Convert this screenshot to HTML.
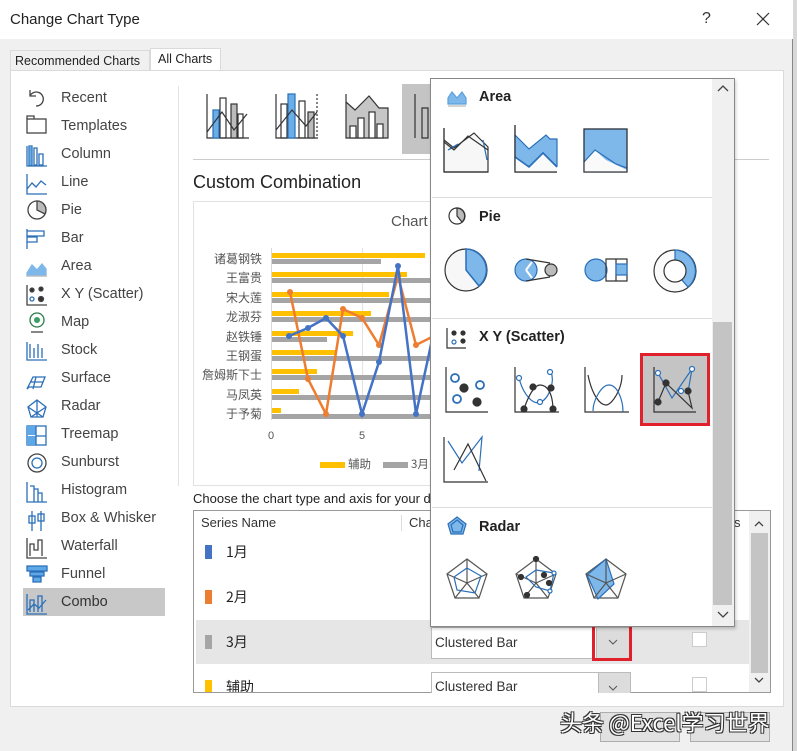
<!DOCTYPE html>
<html><head><meta charset="utf-8"><style>
*{margin:0;padding:0;box-sizing:border-box}
body{width:797px;height:751px;overflow:hidden;background:#d8d8d8;font-family:"Liberation Sans","Noto Sans CJK SC",sans-serif;position:relative;color:#222}
.a{position:absolute}
.t{position:absolute;white-space:nowrap}
.li{position:absolute;left:61px;font-size:14.5px;color:#444}
.ic{position:absolute;left:27px}
.hd{position:absolute;font-weight:bold;font-size:14.5px;color:#222}
.sep{position:absolute;left:432px;width:280px;height:1px;background:#dcdcdc}
.cl{font-size:13.5px;color:#333}
</style></head><body>
<!-- dialog -->
<div class="a" style="left:0;top:0;width:793px;height:751px;background:#f0f0f0;border-right:1px solid #888"></div>
<div class="a" style="left:0;top:0;width:793px;height:39px;background:#fff"></div>
<div class="t" style="left:10px;top:11px;font-size:15px;color:#222">Change Chart Type</div>
<div class="t" style="left:702px;top:10px;font-size:16px;color:#333">?</div>
<svg class="a" style="left:756px;top:12px" width="14" height="14"><path d="M1 1L13 13M13 1L1 13" stroke="#333" stroke-width="1.2"/></svg>
<!-- tabs -->
<div class="a" style="left:10px;top:50px;width:140px;height:21px;border:1px solid #dadada;border-bottom:none;background:#f0f0f0"></div>
<div class="t" style="left:15px;top:54px;font-size:12.5px;color:#222">Recommended Charts</div>
<div class="a" style="left:150px;top:48px;width:71px;height:24px;background:#fff;border:1px solid #dadada;border-bottom:none"></div>
<div class="t" style="left:158px;top:52px;font-size:12.5px;color:#222">All Charts</div>
<div class="a" style="left:10px;top:70px;width:774px;height:637px;background:#fff;border:1px solid #dadada"></div>
<div class="a" style="left:178px;top:86px;width:1px;height:400px;background:#e3e3e3"></div>

<!-- left list -->
<div class="a" style="left:23px;top:588px;width:142px;height:28px;background:#c8c8c8"></div>
<div class="li" style="top:90px">Recent</div>
<div class="li" style="top:118px">Templates</div>
<div class="li" style="top:146px">Column</div>
<div class="li" style="top:174px">Line</div>
<div class="li" style="top:202px">Pie</div>
<div class="li" style="top:230px">Bar</div>
<div class="li" style="top:258px">Area</div>
<div class="li" style="top:286px">X Y (Scatter)</div>
<div class="li" style="top:314px">Map</div>
<div class="li" style="top:342px">Stock</div>
<div class="li" style="top:370px">Surface</div>
<div class="li" style="top:398px">Radar</div>
<div class="li" style="top:426px">Treemap</div>
<div class="li" style="top:454px">Sunburst</div>
<div class="li" style="top:482px">Histogram</div>
<div class="li" style="top:510px">Box &amp; Whisker</div>
<div class="li" style="top:538px">Waterfall</div>
<div class="li" style="top:566px">Funnel</div>
<div class="li" style="top:594px;color:#333">Combo</div>
<svg class="a" style="left:26px;top:86px" width="22" height="530" fill="none" stroke="#444" stroke-width="1.3">
 <path d="M4 4v6h6M4 10A7 7 0 1 1 10 20"/>
 <rect x="1" y="33" width="19" height="14"/><path d="M1 33v-3h7v3"/>
 <path d="M1 60v20h20M3 60h3v19h-3zM8 62h3v17h-3zM13 68h4v11h-4z" stroke="#2a6fb8"/><rect x="3.5" y="61" width="2" height="18" fill="#6aaee8" stroke="none"/>
 <path d="M1 88v20h20M1 103l5-6 4 4 5-6 5 4" stroke="#2a6fb8"/>
 <circle cx="11" cy="124" r="9"/><path d="M11 124V115A9 9 0 0 1 19 128z" fill="#bbb"/>
 <path d="M1 143v20M1 145h17v5H1M1 151h10v5H1" stroke="#2a6fb8"/>
 <path d="M1 187l5-8 5 5 5-6 4 5v7H1z" fill="#7eb8ea" stroke="#7eb8ea"/><path d="M1 190h20" stroke="#bbb"/>
 <path d="M1 199v20h20"/><circle cx="6" cy="204" r="2" fill="#333"/><circle cx="15" cy="203" r="2" fill="#333"/><circle cx="6" cy="213" r="2" stroke="#2a6fb8"/><circle cx="15" cy="213" r="2.5" fill="#333"/>
 <circle cx="11" cy="234" r="7" stroke="#2a7a4a"/><circle cx="11" cy="234" r="3" fill="#3aa060" stroke="none"/><path d="M5 246h12"/>
 <path d="M1 256v18h20M4 258v14M8 262v10M12 258v14M16 262v10" stroke="#2a6fb8"/>
 <path d="M1 303l6-12h12l-4 10H3zM5 296h12M10 291l-3 12" stroke="#2a6fb8"/>
 <path d="M11 314l9 7-3 10H5l-3-10z M11 314v17M2 321l15 10M20 321L5 331" stroke="#2a6fb8"/>
 <rect x="1" y="340" width="19" height="19" stroke="#2a6fb8"/><rect x="1" y="340" width="9" height="9" fill="#5fa8e8" stroke="none"/><rect x="1" y="350" width="9" height="9" fill="#5fa8e8" stroke="none"/><path d="M10 340v19M10 350h10" stroke="#2a6fb8"/>
 <circle cx="11" cy="377" r="9"/><circle cx="11" cy="377" r="5" stroke="#2a6fb8"/>
 <path d="M1 396v20h20M4 400h4v16M8 403h4v13M12 407h4v9" stroke="#2a6fb8"/>
 <path d="M6 425v20M15 425v20" stroke="#2a6fb8"/><rect x="3" y="430" width="6" height="7" stroke="#2a6fb8"/><rect x="12" y="428" width="6" height="7" stroke="#2a6fb8"/>
 <path d="M1 452v20h20M4 470v-12h4v6h4v-10h4v16"/>
 <path d="M1 480h20v5H1zM4 486h14v4H4zM7 491h8v5H7z" fill="#5fa8e8" stroke="#2a6fb8"/>
 <path d="M1 508v20h20M4 526v-12h4v12M12 526v-16h4v16M2 524l6-6 5 4 7-8" stroke="#2a6fb8"/>
</svg>

<!-- top thumbnails -->
<svg class="a" style="left:200px;top:84px" width="240" height="72" fill="none" stroke="#333" stroke-width="1.2">
 <path d="M7 10v44h42"/><rect x="13" y="26" width="6" height="28" fill="#6aaee8" stroke="#2a6fb8"/><rect x="20" y="14" width="6" height="40"/><rect x="31" y="20" width="6" height="34" fill="#bbb"/><rect x="38" y="30" width="5" height="24"/><path d="M7 48l15-20 12 18 13-16"/>
 <path d="M76 10v44h42"/><rect x="81" y="20" width="6" height="34"/><rect x="88" y="10" width="7" height="44" fill="#6aaee8" stroke="#2a6fb8"/><rect x="99" y="17" width="6" height="37"/><rect x="108" y="28" width="6" height="26" fill="#bbb"/><path d="M117 10v44" stroke-dasharray="2 2"/><path d="M76 46l16-20 14 16 11-14"/>
 <path d="M146 10v44h42V24h-9l-10-12-14 14-9-8z" fill="#c6c6c6"/><rect x="150" y="42" width="6" height="12" fill="#fff"/><rect x="158" y="34" width="6" height="20" fill="#fff"/><rect x="169" y="28" width="6" height="26" fill="#fff"/><rect x="177" y="40" width="6" height="14" fill="#fff"/>
 <rect x="202" y="0" width="38" height="70" fill="#c4c4c4" stroke="none"/><path d="M215 10v44M222 24h6v30h-6z"/>
</svg>
<div class="a" style="left:193px;top:159px;width:576px;height:1px;background:#ccc"></div>
<div class="t" style="left:193px;top:172px;font-size:18px;color:#222">Custom Combination</div>

<!-- preview chart -->
<div class="a" style="left:193px;top:201px;width:250px;height:285px;border:1px solid #e2e2e2"></div>
<div class="t" style="left:391px;top:213px;font-size:15px;color:#555">Chart</div>
<div class="a" style="left:362px;top:248px;width:1px;height:172px;background:#e2e2e2"></div>
<div class="a" style="left:271px;top:248px;width:1px;height:172px;background:#d8d8d8"></div>
<div class="t" style="left:196px;top:249px;width:66px;text-align:right;font-size:12px;line-height:19.4px;color:#555;white-space:normal;font-family:'Noto Sans CJK SC',sans-serif">诸葛钢铁<br>王富贵<br>宋大莲<br>龙淑芬<br>赵铁锤<br>王钢蛋<br>詹姆斯下士<br>马凤英<br>于予菊</div>
<svg class="a" style="left:0;top:0" width="432" height="480">
 <g fill="#ffc000">
 <rect x="272" y="253" width="153" height="5"/><rect x="272" y="272" width="135" height="5"/><rect x="272" y="292" width="117" height="5"/><rect x="272" y="311" width="99" height="5"/><rect x="272" y="331" width="81" height="5"/><rect x="272" y="350" width="63" height="5"/><rect x="272" y="369" width="45" height="5"/><rect x="272" y="389" width="27" height="5"/><rect x="272" y="408" width="9" height="5"/>
 </g>
 <g fill="#a5a5a5">
 <rect x="272" y="259" width="109" height="5"/><rect x="272" y="278" width="160" height="5"/><rect x="272" y="298" width="160" height="5"/><rect x="272" y="317" width="160" height="5"/><rect x="272" y="337" width="55" height="5"/><rect x="272" y="356" width="160" height="5"/><rect x="272" y="375" width="160" height="5"/><rect x="272" y="395" width="160" height="5"/><rect x="272" y="414" width="160" height="5"/>
 </g>
 <polyline points="290,292 308,379 326,414 343,309 362,318 379,345 398,276 416,345 432,337" fill="none" stroke="#ed7d31" stroke-width="2.5"/>
 <g fill="#ed7d31"><circle cx="290" cy="292" r="3"/><circle cx="308" cy="379" r="3"/><circle cx="326" cy="414" r="3"/><circle cx="343" cy="309" r="3"/><circle cx="362" cy="318" r="3"/><circle cx="379" cy="345" r="3"/><circle cx="398" cy="276" r="3"/><circle cx="416" cy="345" r="3"/></g>
 <polyline points="289,336 308,328 326,318 343,336 362,414 379,362 398,266 416,414 432,340" fill="none" stroke="#4472c4" stroke-width="2.5"/>
 <g fill="#4472c4"><circle cx="289" cy="336" r="3"/><circle cx="308" cy="328" r="3"/><circle cx="326" cy="318" r="3"/><circle cx="343" cy="336" r="3"/><circle cx="362" cy="414" r="3"/><circle cx="379" cy="362" r="3"/><circle cx="398" cy="266" r="3"/><circle cx="416" cy="414" r="3"/></g>
 <rect x="320" y="462" width="25" height="6" fill="#ffc000"/><rect x="383" y="462" width="25" height="6" fill="#a5a5a5"/>
</svg>
<div class="t" style="left:268px;top:430px;font-size:11px;color:#555">0</div>
<div class="t" style="left:359px;top:430px;font-size:11px;color:#555">5</div>
<div class="t" style="left:348px;top:456px;font-size:11.5px;color:#555;font-family:'Noto Sans CJK SC',sans-serif">辅助</div>
<div class="t" style="left:411px;top:456px;font-size:11.5px;color:#555;font-family:'Noto Sans CJK SC',sans-serif">3月</div>

<div class="t" style="left:193px;top:491px;font-size:13px;color:#222">Choose the chart type and axis for your data series:</div>
<!-- series table -->
<div class="a" style="left:193px;top:510px;width:578px;height:183px;border:1px solid #999;background:#fff;overflow:hidden">
 <div class="t" style="left:7px;top:4px;font-size:13px;color:#333">Series Name</div>
 <div class="a" style="left:207px;top:4px;width:1px;height:16px;background:#ddd"></div>
 <div class="t" style="left:215px;top:4px;font-size:13px;color:#333">Chart Type</div>
 <div class="t" style="left:522px;top:4px;font-size:13px;color:#333">Axis</div>
 <div class="a" style="left:2px;top:109px;width:553px;height:44px;background:#e6e6e6"></div>
 <div class="a" style="left:11px;top:34px;width:7px;height:14px;background:#4472c4"></div>
 <div class="t" style="left:32px;top:31px;font-size:14px;font-family:'Noto Sans CJK SC',sans-serif">1月</div>
 <div class="a" style="left:11px;top:79px;width:7px;height:14px;background:#ed7d31"></div>
 <div class="t" style="left:32px;top:76px;font-size:14px;font-family:'Noto Sans CJK SC',sans-serif">2月</div>
 <div class="a" style="left:11px;top:124px;width:7px;height:14px;background:#a5a5a5"></div>
 <div class="t" style="left:32px;top:121px;font-size:14px;font-family:'Noto Sans CJK SC',sans-serif">3月</div>
 <div class="a" style="left:11px;top:169px;width:7px;height:14px;background:#ffc000"></div>
 <div class="t" style="left:32px;top:166px;font-size:14px;font-family:'Noto Sans CJK SC',sans-serif">辅助</div>
 <div class="a" style="left:498px;top:121px;width:15px;height:15px;background:#fff;border:1px solid #ccc"></div>
 <div class="a" style="left:498px;top:166px;width:15px;height:15px;background:#fff;border:1px solid #ccc"></div>
 <div class="a" style="left:555px;top:0;width:22px;height:183px;background:#f0f0f0"></div>
 <div class="a" style="left:557px;top:22px;width:17px;height:140px;background:#c4c4c4"></div>
 <svg class="a" style="left:559px;top:7px" width="12" height="170" fill="none" stroke="#444" stroke-width="1.3"><path d="M2 8l4-4 4 4M2 160l4 4 4-4"/></svg>
</div>
<!-- combos -->
<div class="a" style="left:431px;top:627px;width:200px;height:32px;background:#fff;border:1px solid #bbb"></div>
<div class="t cl" style="left:435px;top:635px">Clustered Bar</div>
<div class="a" style="left:596px;top:628px;width:34px;height:30px;background:#dcdcdc;border-left:1px solid #bbb"></div>
<div class="a" style="left:592px;top:624px;width:40px;height:37px;border:3px solid #e0202a"></div>
<svg class="a" style="left:607px;top:638px" width="12" height="8"><path d="M2 2l4 4 4-4" fill="none" stroke="#555"/></svg>
<div class="a" style="left:431px;top:672px;width:200px;height:21px;background:#fff;border:1px solid #bbb;border-bottom:none"></div>
<div class="t cl" style="left:435px;top:679px">Clustered Bar</div>
<div class="a" style="left:598px;top:673px;width:32px;height:20px;background:#dcdcdc;border-left:1px solid #bbb"></div>
<svg class="a" style="left:607px;top:684px" width="12" height="8"><path d="M2 2l4 4 4-4" fill="none" stroke="#555"/></svg>

<!-- dropdown panel -->
<div class="a" style="left:430px;top:78px;width:305px;height:549px;background:#fff;border:1px solid #888;box-shadow:1px 2px 3px rgba(0,0,0,.2)"></div>
<div class="a" style="left:712px;top:79px;width:22px;height:547px;background:#f0f0f0"></div>
<div class="a" style="left:713px;top:322px;width:19px;height:283px;background:#c4c4c4"></div>
<svg class="a" style="left:716px;top:82px" width="14" height="540" fill="none" stroke="#444" stroke-width="1.3"><path d="M2 9l5-5 5 5M2 530l5 5 5-5"/></svg>
<div class="sep" style="top:197px"></div><div class="sep" style="top:318px"></div><div class="sep" style="top:507px"></div>
<div class="hd" style="left:479px;top:89px">Area</div>
<div class="hd" style="left:479px;top:209px">Pie</div>
<div class="hd" style="left:479px;top:329px">X Y (Scatter)</div>
<div class="hd" style="left:479px;top:519px">Radar</div>
<div class="a" style="left:640px;top:353px;width:70px;height:73px;background:#c4c4c4;border:3px solid #e0202a"></div>
<svg class="a" style="left:430px;top:78px" width="282" height="540" fill="none" stroke="#333" stroke-width="1.2">
 <!-- area hdr -->
 <path d="M18 20l4-6 5 6 5-6 4 6v6H18z" fill="#7eb8ea" stroke="#5aa0dc"/><path d="M18 28h18" stroke="#bbb"/>
 <!-- area thumbs -->
 <path d="M14 50v44h44V69l-14-14-20 15-10-8" fill="#f7f7f7"/><path d="M14 94V50M14 94h44" /><path d="M18 72l10-6-6 4zM53 62l4 20" fill="#7eb8ea" stroke="#2a6fb8"/><path d="M14 64l10 8 14-14 20 14"/>
 <path d="M85 47v47h42" /><path d="M85 57l14 14 17-14 4 4h7v27H85z" fill="#7eb8ea" stroke="#2a6fb8"/><path d="M85 79l14 10 14-14 14 14" stroke="#2a6fb8" stroke-width="1.6"/><path d="M85 79l14 10 14-14 14 14v5H85z" fill="#fafafa" stroke="none"/><path d="M85 79l14 10 14-14 14 14" stroke="#2a6fb8" stroke-width="1.6"/><path d="M85 47v47h42"/>
 <rect x="154" y="51" width="43" height="43" fill="#7eb8ea" stroke="#2a6fb8"/><path d="M154 84l11-12 11 10 21 10v2h-43z" fill="#fafafa" stroke="none"/><path d="M154 84l11-12 21 14 11 4" stroke="#2a6fb8"/><rect x="154" y="51" width="43" height="43"/>
 <!-- pie hdr -->
 <circle cx="27" cy="138" r="8"/><path d="M27 138v-8a8 8 0 0 1 5 14z" fill="#bbb"/>
 <!-- pie thumbs -->
 <circle cx="36" cy="192" r="21" fill="#f7f7f7"/><path d="M36 192v-21a21 21 0 0 1 13 37z" fill="#7eb8ea" stroke="#2a6fb8" stroke-width="1.5"/>
 <circle cx="96" cy="192" r="11" fill="#7eb8ea" stroke="#2a6fb8"/><path d="M96 192l6-8 M96 192l6 8" stroke="#fff" stroke-width="2"/><path d="M96 181l24 4M96 203l24-4"/><circle cx="121" cy="192" r="6" fill="#bbb"/>
 <circle cx="166" cy="192" r="11" fill="#7eb8ea" stroke="#2a6fb8"/><path d="M176 181h21v22h-21zM186 181v22M186 192h11"/><rect x="186" y="186" width="11" height="11" fill="#7eb8ea" stroke="#2a6fb8"/>
 <circle cx="245" cy="193" r="21" fill="#fafafa"/><path d="M245 172a21 21 0 0 1 13 37l-7-8a11 11 0 0 0-6-18z" fill="#7eb8ea" stroke="#2a6fb8"/><circle cx="245" cy="193" r="11" fill="#fff"/>
 <!-- scatter hdr -->
 <path d="M17 250v20h19"/><circle cx="24" cy="255" r="2" fill="#333"/><circle cx="33" cy="255" r="2" fill="#333"/><circle cx="24" cy="264" r="2" stroke="#2a6fb8"/><circle cx="33" cy="263" r="2" fill="#333"/>
 <!-- scatter thumbs -->
 <path d="M16 289v45h42"/><circle cx="25" cy="300" r="4" stroke="#2a6fb8" stroke-width="1.8"/><circle cx="50" cy="307" r="4" stroke="#2a6fb8" stroke-width="1.8"/><circle cx="27" cy="321" r="4" stroke="#2a6fb8" stroke-width="1.8"/><circle cx="34" cy="310" r="4" fill="#333"/><circle cx="47" cy="324" r="4" fill="#333"/>
 <path d="M85 289v45h44"/><path d="M89 300c4 16 14 28 22 24s14-20 10-30" stroke="#2a6fb8"/><path d="M94 331c4-12 10-24 16-24s13 6 13 26"/><circle cx="89" cy="300" r="2.5" fill="#fff" stroke="#2a6fb8"/><circle cx="110" cy="324" r="2.5" fill="#fff" stroke="#2a6fb8"/><circle cx="120" cy="294" r="2.5" fill="#fff" stroke="#2a6fb8"/><circle cx="94" cy="331" r="3" fill="#333"/><circle cx="103" cy="309" r="3" fill="#333"/><circle cx="121" cy="310" r="3" fill="#333"/><circle cx="123" cy="331" r="3" fill="#333"/>
 <path d="M155 289v45h44"/><path d="M158 297c4 20 12 30 18 30s16-16 16-30" /><path d="M163 333c0-10 8-26 16-26s14 14 14 27" stroke="#2a6fb8"/>
 <!-- selected -->
 <path d="M224 289v45h42"/><path d="M228 295l14 25 20-29-4 23" stroke="#2a6fb8"/><path d="M228 324l8-19 26 25-4-17"/><circle cx="228" cy="295" r="2.5" fill="#fff" stroke="#2a6fb8"/><circle cx="262" cy="291" r="2.5" fill="#fff" stroke="#2a6fb8"/><circle cx="251" cy="313" r="2.5" fill="#fff" stroke="#2a6fb8"/><circle cx="228" cy="324" r="3" fill="#333"/><circle cx="236" cy="305" r="3" fill="#333"/><circle cx="258" cy="313" r="3" fill="#333"/>
 <path d="M14 359v45h44"/><path d="M18 363l14 22 20-26-3 34" stroke="#2a6fb8"/><path d="M24 392l14-26 18 37"/>
 <!-- radar hdr -->
 <path d="M27 439l9 7-3 10H21l-3-10z" fill="#7eb8ea" stroke="#2a6fb8"/><path d="M27 442l6 5-2 7h-8l-2-7z" stroke="#2a6fb8"/>
 <!-- radar thumbs -->
 <path d="M37 481l20 15-8 24H25l-8-24z M37 481v24M17 496l20 9 20-9M25 520l12-15 12 15" stroke="#555"/><path d="M37 490l14 8-6 17-18-3-3-13z" stroke="#2a6fb8"/>
 <path d="M106 481l20 15-8 24H94l-8-24z M106 481v24M86 496l20 9 20-9M94 520l12-15 12 15" stroke="#555"/><path d="M106 492l18 3-4 18-14-4-10-10z" stroke="#2a6fb8"/><circle cx="106" cy="481" r="2.5" fill="#333"/><circle cx="91" cy="499" r="2.5" fill="#333"/><circle cx="97" cy="517" r="2.5" fill="#333"/><circle cx="119" cy="505" r="2.5" fill="#333"/><circle cx="114" cy="497" r="2.5" fill="#333"/><circle cx="124" cy="495" r="2" fill="#fff" stroke="#2a6fb8"/><circle cx="120" cy="513" r="2" fill="#fff" stroke="#2a6fb8"/>
 <path d="M176 481l20 15-8 24h-24l-8-24z" fill="#fafafa" stroke="#555"/><path d="M176 481l8 25-16 15-11-24z" fill="#7eb8ea" stroke="#2a6fb8"/><path d="M176 481v24M156 496l20 9 20-9M164 520l12-15 12 15" stroke="#555"/>
</svg>

<!-- bottom buttons & watermark -->
<div class="a" style="left:600px;top:712px;width:80px;height:30px;border:1px solid #adadad;background:#e1e1e1"></div>
<div class="a" style="left:690px;top:712px;width:80px;height:30px;border:1px solid #adadad;background:#e1e1e1"></div>
<div class="t" style="left:560px;top:706px;font-size:22px;color:#fff;font-family:'Noto Sans CJK SC',sans-serif;text-shadow:1px 1px 0 #333,-1px -1px 0 #333,1px -1px 0 #333,-1px 1px 0 #333">头条 @Excel学习世界</div>
</body></html>
